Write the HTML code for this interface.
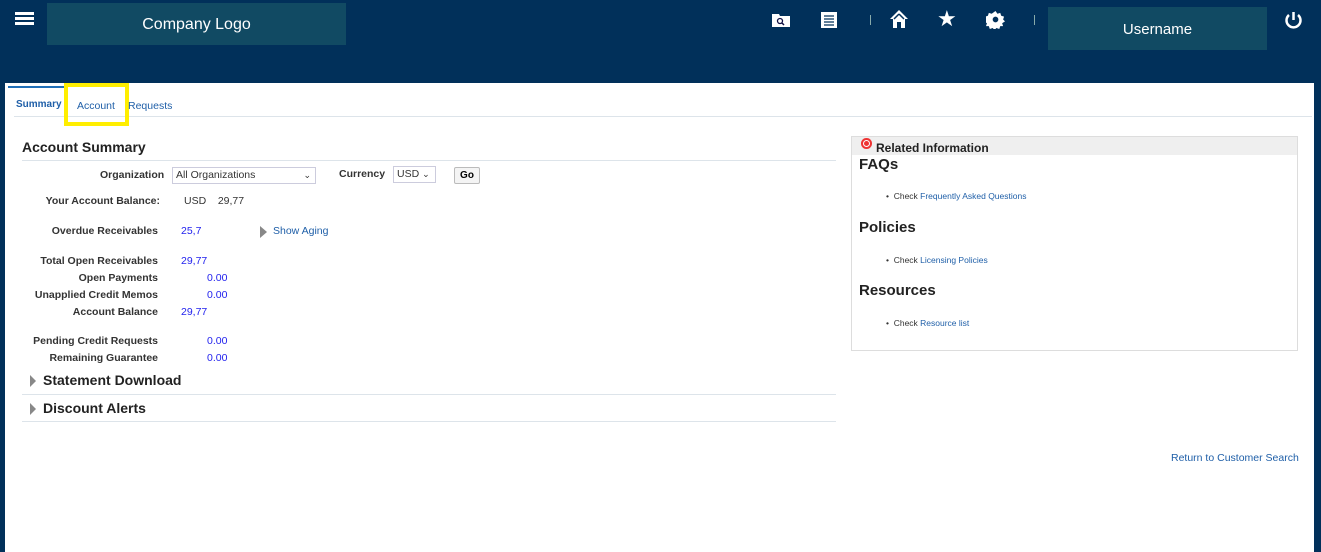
<!DOCTYPE html>
<html><head><meta charset="utf-8"><style>
body{margin:0;width:1321px;height:552px;background:#01305a;font-family:"Liberation Sans",Arial,sans-serif;position:relative;overflow:hidden}
.a{position:absolute;white-space:nowrap}
.panel{background:#114a63;color:#fff}
.lbl{font-size:10.5px;font-weight:bold;color:#333;text-align:right;width:158px;left:0}
.v{font-size:10.5px;color:#2222ee}
.lnk{color:#1f5fa8}
</style></head><body>
<div class="a" style="left:15px;top:12px;width:19px;height:3px;background:#fff;box-shadow:0 5px 0 #fff,0 10px 0 #fff"></div>
<div class="a panel" style="left:47px;top:3px;width:299px;height:42px;font-size:16px;line-height:44px;text-align:center">Company Logo</div>
<svg class="a" style="left:771px;top:12px" width="20" height="16"><path d="M1 2h7l1 2h10v11H1z" fill="#fff"/><circle cx="9" cy="9" r="2.5" fill="none" stroke="#114" stroke-width="1.3"/><path d="M11 11l2 2" stroke="#114" stroke-width="1.5"/></svg>
<svg class="a" style="left:820px;top:11px" width="18" height="18"><rect x="1" y="1" width="16" height="16" fill="#fff"/><path d="M4 5h10M4 8h10M4 11h10M4 14h10" stroke="#01305a" stroke-width="1.3"/></svg>
<div class="a" style="left:870px;top:15px;width:1px;height:10px;background:#8aa"></div>
<svg class="a" style="left:889px;top:9px" width="20" height="20"><path d="M10 1L1 10h3v9h4v-6h4v6h4v-9h3z" fill="#fff"/><path d="M10 5L5 10" stroke="#01305a" stroke-width="1.5"/><path d="M10 5l5 5" stroke="#01305a" stroke-width="1.5"/></svg>
<div class="a" style="left:937px;top:6px;color:#fff;font-size:22px">★</div>
<svg class="a" style="left:986px;top:10px" width="19" height="19" viewBox="0 0 20 20"><path d="M10 1l2 3 3-1 1 3 3 1-1 3 2 2-3 2 1 3-3 0-1 3-3-1-2 2-2-2-3 1-1-3-3 0 1-3-3-2 2-2-1-3 3-1 1-3 3 1z" fill="#fff"/><circle cx="10" cy="10" r="3" fill="#01305a"/></svg>
<div class="a" style="left:1034px;top:15px;width:1px;height:10px;background:#8aa"></div>
<div class="a panel" style="left:1048px;top:7px;width:219px;height:43px;font-size:15px;line-height:45px;text-align:center">Username</div>
<svg class="a" style="left:1284px;top:10px" width="19" height="19"><path d="M5 5a7 7 0 1 0 9 0" fill="none" stroke="#fff" stroke-width="2.5"/><path d="M9.5 2v8" stroke="#fff" stroke-width="2.5"/></svg>
<div class="a" style="left:5px;top:83px;width:1309px;height:469px;background:#fff"></div>
<div class="a" style="left:8px;top:86px;width:56px;height:2px;background:#1f6fb8"></div>
<div class="a" style="left:14px;top:116px;width:1298px;height:1px;background:#dde4ea"></div>
<div class="a" style="left:16px;top:99px;font-size:10px;font-weight:bold;color:#1f5fa8">Summary</div>
<div class="a" style="left:64px;top:83px;width:57px;height:35px;border:4px solid #ffee00"></div>
<div class="a lnk" style="left:77px;top:100px;font-size:10.5px">Account</div>
<div class="a lnk" style="left:128px;top:100px;font-size:10.5px">Requests</div>
<div class="a" style="left:22px;top:139px;font-size:14px;font-weight:bold;color:#222">Account Summary</div>
<div class="a" style="left:22px;top:160px;width:814px;height:1px;background:#dde4ea"></div>
<div class="a" style="left:100px;top:169px;font-size:10.5px;font-weight:bold;color:#333">Organization</div>
<div class="a" style="left:172px;top:167px;width:139px;height:15px;border:1px solid #ccd;font-size:10.5px;color:#333;line-height:15px;padding-left:3px">All Organizations<span style="position:absolute;right:4px;font-size:9px">&#x2304;</span></div>
<div class="a" style="left:339px;top:168px;font-size:10.5px;font-weight:bold;color:#333">Currency</div>
<div class="a" style="left:393px;top:166px;width:38px;height:15px;border:1px solid #ccd;font-size:10.5px;color:#333;line-height:15px;padding-left:3px">USD <span style="font-size:9px">&#x2304;</span></div>
<div class="a" style="left:454px;top:167px;width:24px;height:15px;border:1px solid #bbb;background:#f4f4f4;border-radius:2px;font-size:10px;font-weight:bold;text-align:center;line-height:15px">Go</div>
<div class="a lbl" style="top:195px;width:160px">Your Account Balance:</div>
<div class="a" style="left:184px;top:195px;font-size:10.5px;color:#333">USD&nbsp;&nbsp;&nbsp;&nbsp;29,77</div>
<div class="a lbl" style="top:225px">Overdue Receivables</div>
<div class="a v" style="left:181px;top:225px">25,7</div>
<div class="a" style="left:260px;top:226px;width:0;height:0;border-left:7px solid #888;border-top:6px solid transparent;border-bottom:6px solid transparent"></div>
<div class="a lnk" style="left:273px;top:225px;font-size:10.5px">Show Aging</div>
<div class="a lbl" style="top:255px">Total Open Receivables</div><div class="a v" style="left:181px;top:255px">29,77</div>
<div class="a lbl" style="top:272px">Open Payments</div><div class="a v" style="left:207px;top:272px">0.00</div>
<div class="a lbl" style="top:289px">Unapplied Credit Memos</div><div class="a v" style="left:207px;top:289px">0.00</div>
<div class="a lbl" style="top:306px">Account Balance</div><div class="a v" style="left:181px;top:306px">29,77</div>
<div class="a lbl" style="top:335px">Pending Credit Requests</div><div class="a v" style="left:207px;top:335px">0.00</div>
<div class="a lbl" style="top:352px">Remaining Guarantee</div><div class="a v" style="left:207px;top:352px">0.00</div>
<div class="a" style="left:30px;top:375px;border-left:6px solid #888;border-top:6px solid transparent;border-bottom:6px solid transparent"></div>
<div class="a" style="left:43px;top:372px;font-size:14px;font-weight:bold;color:#222">Statement Download</div>
<div class="a" style="left:22px;top:394px;width:814px;height:1px;background:#dde4ea"></div>
<div class="a" style="left:30px;top:403px;border-left:6px solid #888;border-top:6px solid transparent;border-bottom:6px solid transparent"></div>
<div class="a" style="left:43px;top:400px;font-size:14px;font-weight:bold;color:#222">Discount Alerts</div>
<div class="a" style="left:22px;top:421px;width:814px;height:1px;background:#dde4ea"></div>
<div class="a" style="left:851px;top:136px;width:445px;height:213px;border:1px solid #ddd"></div>
<div class="a" style="left:852px;top:137px;width:445px;height:18px;background:#efefef"></div>
<div class="a" style="left:861px;top:138px;width:11px;height:11px;border-radius:50%;background:#e33;box-shadow:inset 0 0 0 2px #e33,inset 0 0 0 3px #fff"></div>
<div class="a" style="left:876px;top:141px;font-size:12px;font-weight:bold;color:#222">Related Information</div>
<div class="a" style="left:859px;top:156px;font-size:15px;font-weight:bold;color:#222">FAQs</div>
<div class="a" style="left:886px;top:191px;font-size:8.5px;color:#333">•&nbsp; Check <span class="lnk">Frequently Asked Questions</span></div>
<div class="a" style="left:859px;top:219px;font-size:15px;font-weight:bold;color:#222">Policies</div>
<div class="a" style="left:886px;top:255px;font-size:8.5px;color:#333">•&nbsp; Check <span class="lnk">Licensing Policies</span></div>
<div class="a" style="left:859px;top:282px;font-size:15px;font-weight:bold;color:#222">Resources</div>
<div class="a" style="left:886px;top:318px;font-size:8.5px;color:#333">•&nbsp; Check <span class="lnk">Resource list</span></div>
<div class="a lnk" style="left:1171px;top:452px;font-size:10.5px">Return to Customer Search</div>
</body></html>
